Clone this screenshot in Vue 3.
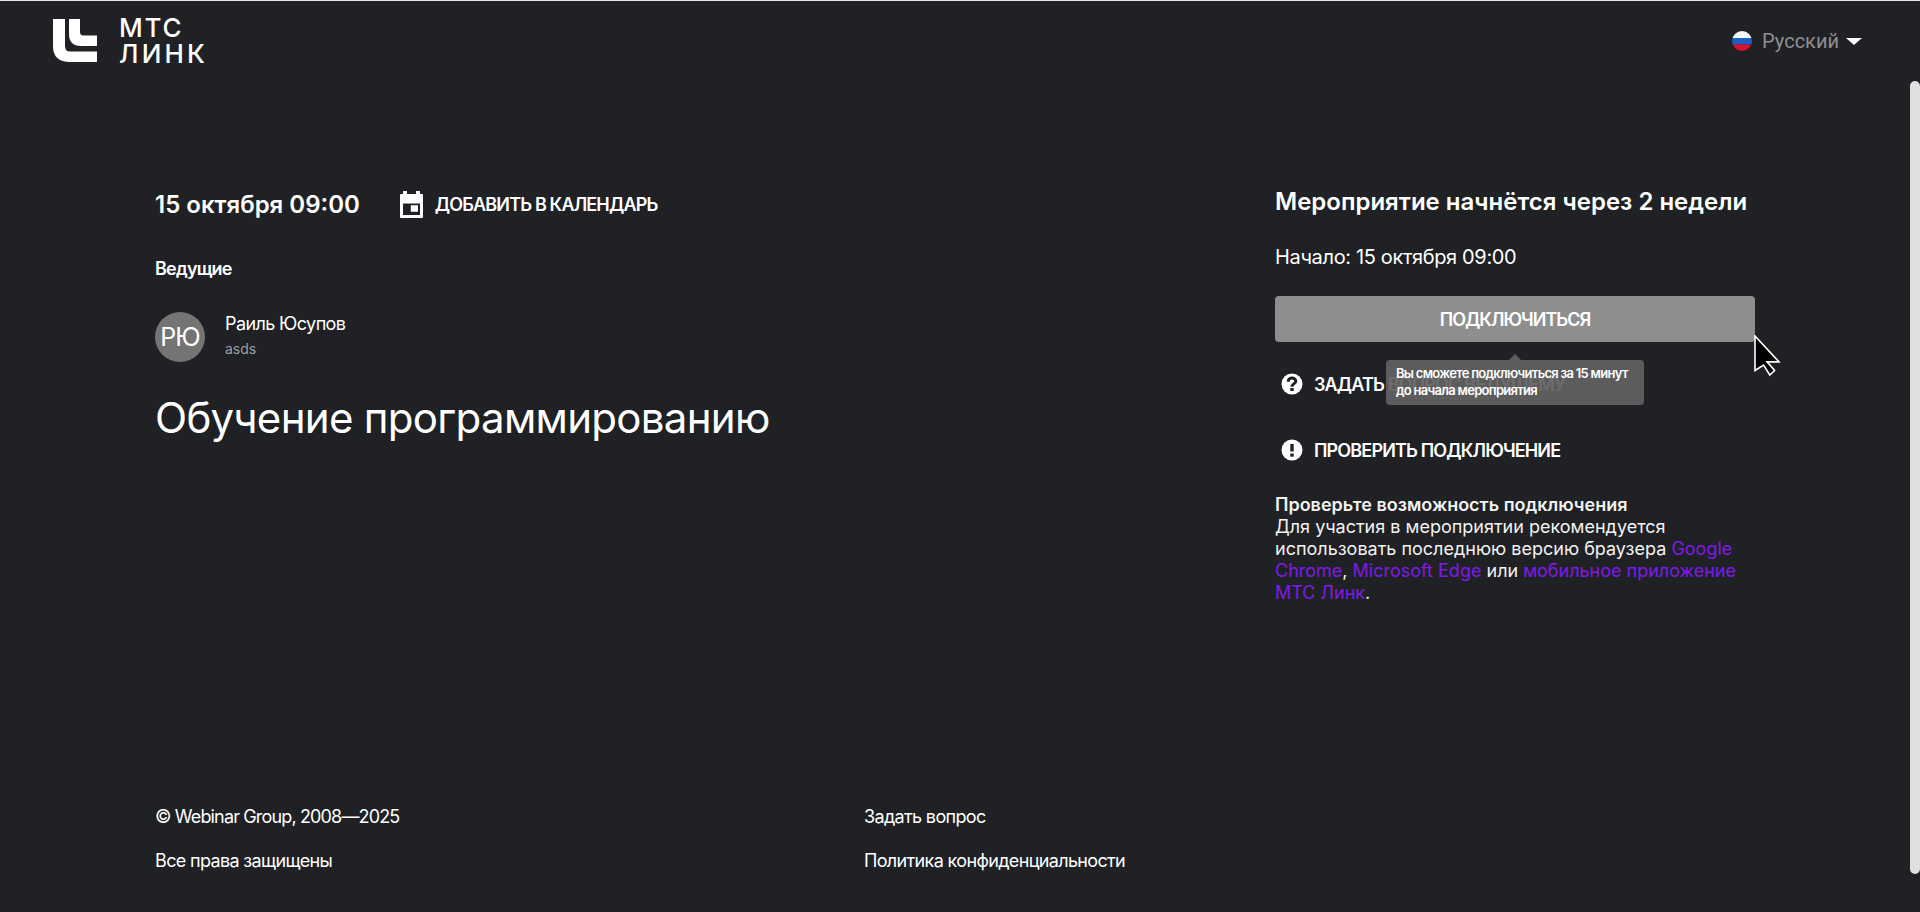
<script setup>
const hosts = [{ initials: 'РЮ', name: 'Раиль Юсупов', role: 'asds' }]
</script>

<template>
  <div class="page">
    <header class="header">
      <div class="logo">
        <svg class="logo-mark" width="44" height="44" viewBox="0 0 44 44">
          <path fill="#fff" d="M0 0H12V27Q12 32.500 17 32.500H44V43H17Q0 43 0 27Z" />
          <path fill="#fff" d="M16 0H27V13Q27 16.500 30.500 16.500H44V27H28Q16 27 16 15Z" />
        </svg>
        <div class="logo-text"><span>МТС</span><span class="wide">ЛИНК</span></div>
      </div>
      <div class="lang">
        <svg width="20" height="20" viewBox="0 0 20 20">
          <defs><clipPath id="flag"><circle cx="10" cy="10" r="10" /></clipPath></defs>
          <g clip-path="url(#flag)">
            <rect width="20" height="7" fill="#f5f5f5" />
            <rect y="7" width="20" height="6.5" fill="#1d5fc4" />
            <rect y="13.5" width="20" height="6.5" fill="#d8112f" />
          </g>
        </svg>
        <span class="lang-name">Русский</span>
        <span class="caret"></span>
      </div>
    </header>

    <main class="main">
      <section class="left">
        <div class="date-row">
          <span class="date">15 октября 09:00</span>
          <a class="cal">
            <svg width="23" height="27" viewBox="0 0 23 27">
              <path fill="#fff" fill-rule="evenodd" d="M3 0H7V3H16V0H20V3H22A1 1 0 0 1 23 4V26A1 1 0 0 1 22 27H1A1 1 0 0 1 0 26V4A1 1 0 0 1 1 3H3ZM3 12.500V24H20V12.500ZM10.800 14.300H18V20.700H10.800Z" />
            </svg>
            <span>ДОБАВИТЬ В КАЛЕНДАРЬ</span>
          </a>
        </div>
        <h3 class="hosts-title">Ведущие</h3>
        <div v-for="h in hosts" :key="h.name" class="host">
          <div class="avatar">{{ h.initials }}</div>
          <div class="host-info">
            <div class="host-name">{{ h.name }}</div>
            <div class="host-role">{{ h.role }}</div>
          </div>
        </div>
        <h1 class="title">Обучение программированию</h1>
      </section>

      <aside class="right">
        <h2 class="countdown">Мероприятие начнётся через 2 недели</h2>
        <div class="start">Начало: 15 октября 09:00</div>
        <div class="join-wrap">
          <button class="join">ПОДКЛЮЧИТЬСЯ</button>
          <svg class="cursor" width="27" height="42" viewBox="0 0 27 42">
            <path fill="#000" stroke="#fff" stroke-width="1.600" d="M1 1V35.500L9.600 30L15.800 40L20.600 35.500L13 26.900H25Z" />
          </svg>
        </div>
        <div class="action ask">
          <svg width="22" height="22" viewBox="0 0 22 22">
            <circle cx="11" cy="11" r="10.500" fill="#fff" />
            <path fill="none" stroke="#1f2125" stroke-width="3" d="M7.200 8.700C7.200 6.300 9 5 11 5S14.800 6.300 14.800 8.300C14.800 10.600 11 10.700 11 13.700" />
            <rect x="9.300" y="15" width="3.400" height="3" fill="#1f2125" />
          </svg>
          <span>ЗАДАТЬ ВОПРОС ВЕДУЩЕМУ</span>
          <div class="tooltip">
            <span class="arrow"></span>
            Вы сможете подключиться за 15 минут<br />до начала мероприятия
          </div>
        </div>
        <div class="action check">
          <svg width="22" height="22" viewBox="0 0 22 22">
            <circle cx="11" cy="11" r="10.500" fill="#fff" />
            <rect x="9.300" y="5" width="3.400" height="7.500" fill="#1f2125" />
            <rect x="9.300" y="14.500" width="3.400" height="3.200" fill="#1f2125" />
          </svg>
          <span>ПРОВЕРИТЬ ПОДКЛЮЧЕНИЕ</span>
        </div>
        <p class="note">
          <b>Проверьте возможность подключения</b><br />
          Для участия в мероприятии рекомендуется использовать последнюю версию браузера
          <a>Google Chrome</a>, <a>Microsoft Edge</a> или <a>мобильное приложение МТС&nbsp;Линк</a>.
        </p>
      </aside>
    </main>

    <footer class="footer">
      <div class="foot-col">
        <div class="latin">© Webinar Group, 2008—2025</div>
        <div>Все права защищены</div>
      </div>
      <div class="foot-col">
        <div>Задать вопрос</div>
        <div>Политика конфиденциальности</div>
      </div>
    </footer>
    <div class="scrollbar"></div>
  </div>
</template>

<style>
html, body { margin: 0; background: #1f2125; overflow: hidden; }
</style>

<style scoped>
.page {
  position: relative;
  height: 912px;
  box-sizing: border-box;
  border-top: 1px solid #e6e6e6;
  background: #1f2125;
  color: #fff;
  font-family: Inter, "Liberation Sans", sans-serif;
  letter-spacing: -0.5px;
  display: flex;
  flex-direction: column;
  overflow: hidden;
}
.header {
  height: 79px;
  padding: 18px 58px 0 53px;
  box-sizing: border-box;
  display: flex;
  justify-content: space-between;
  align-items: flex-start;
}
.logo { display: flex; gap: 22px; align-items: flex-start; }
.logo-mark { display: block; }
.logo-text {
  font-size: 26px;
  font-weight: 500;
  line-height: 26px;
  letter-spacing: 1.800px;
  display: flex;
  flex-direction: column;
  margin-top: -4px;
}
.logo-text .wide { letter-spacing: 3.200px; }
.lang { display: flex; align-items: center; margin-top: 10px; letter-spacing: 0; }
.lang-name { font-family: Roboto, sans-serif; color: #8f8f8f; font-size: 20px; line-height: 24px; margin-left: 10px; }
.caret {
  width: 0; height: 0; margin-left: 7px;
  border-left: 8px solid transparent;
  border-right: 8px solid transparent;
  border-top: 7px solid #fff;
}
.main {
  flex: 1;
  padding: 0 0 0 155px;
  display: flex;
  justify-content: space-between;
}
.left { margin-top: 108px; }
.date-row { display: flex; align-items: center; height: 32px; }
.date { font-size: 24px; font-weight: 600; letter-spacing: 0; }
.cal { display: flex; align-items: center; margin-left: 40px; gap: 12px; font-size: 18px; font-weight: 600; letter-spacing: -0.85px; }
.cal svg { display: block; }
.hosts-title { margin: 38px 0 0; font-size: 18px; line-height: 22px; font-weight: 600; letter-spacing: -0.8px; }
.host { display: flex; margin-top: 30px; align-items: flex-start; gap: 20px; }
.avatar {
  width: 50px; height: 50px; border-radius: 50%; margin-top: 2px;
  background: #747474; color: #fff; font-size: 25px; letter-spacing: -1px;
  display: flex; align-items: center; justify-content: center;
}
.host-info { margin-top: 2px; }
.host-name { font-size: 18px; line-height: 24px; letter-spacing: -0.6px; }
.host-role { font-size: 14px; line-height: 18px; margin-top: 4px; color: #9b9fa6; letter-spacing: 0; }
.title { margin: 31px 0 0; font-size: 42px; font-weight: 400; line-height: 50px; letter-spacing: -0.7px; }
.right { width: 480px; margin: 106px 165px 0 0; }
.countdown { margin: 0; font-size: 24px; font-weight: 600; line-height: 32px; letter-spacing: 0; }
.start { margin-top: 25px; font-size: 20px; line-height: 28px; letter-spacing: -0.35px; }
.join-wrap { position: relative; margin-top: 25px; }
.join {
  display: block; width: 100%; height: 46px; border: 0; border-radius: 4px;
  background: #8e8e8e; color: #fff; font: 600 18px Inter, sans-serif; letter-spacing: -1px;
}
.cursor { position: absolute; left: 479px; top: 39px; }
.action {
  position: relative; display: flex; align-items: center; gap: 11px;
  margin-left: 6px; font-size: 18px; font-weight: 600; letter-spacing: -0.85px; height: 26px;
}
.ask { margin-top: 29px; color: #fff; }
.check { margin-top: 40px; }
.tooltip {
  position: absolute; left: 105px; top: -11px;
  width: 248px; height: 40px; padding: 5px 0 0 10px;
  white-space: nowrap;
  background: rgba(97, 97, 97, .93); border-radius: 4px;
  font-size: 13px; line-height: 17px; font-weight: 600; letter-spacing: -0.72px;
}
.arrow {
  position: absolute; left: 123px; top: -6px; width: 0; height: 0;
  border-left: 6px solid transparent; border-right: 6px solid transparent;
  border-bottom: 6px solid #5c5c5c;
}
.note { margin: 31px 0 0; font-size: 18px; line-height: 22px; color: #f2f2f2; letter-spacing: 0; }
.note b { font-weight: 600; }
.note a { color: #7f1ae8; }
.footer {
  height: 106px; margin-left: 155px;
  display: flex; font-size: 18px; letter-spacing: -0.65px;
}
.foot-col { width: 709px; display: flex; flex-direction: column; gap: 22px; }
.foot-col div { line-height: 22px; }
.foot-col .latin { letter-spacing: -0.85px; }
.scrollbar {
  position: absolute; right: 0; top: 80px; width: 10px; height: 793px;
  background: #e0e0e0; border-radius: 5px;
}
</style>
